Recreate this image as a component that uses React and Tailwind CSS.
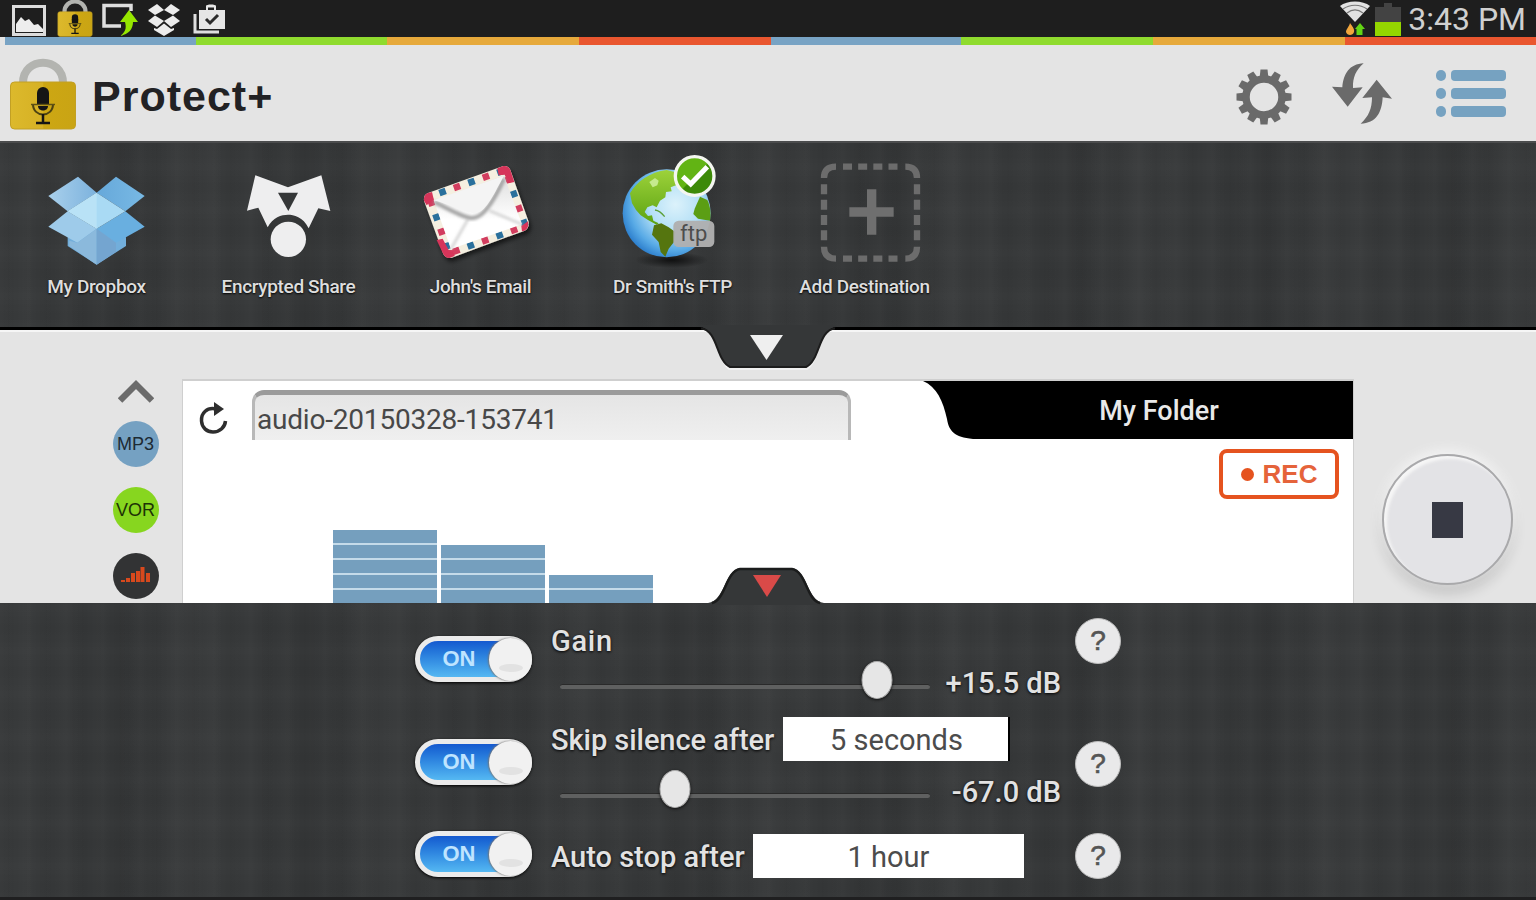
const LINEN =
  'bg-[#363839] bg-[repeating-linear-gradient(0deg,transparent_0px,rgba(0,0,0,0.025)_11px,transparent_19px,rgba(255,255,255,0.012)_31px,transparent_43px),repeating-linear-gradient(90deg,transparent_0px,rgba(0,0,0,0.03)_9px,transparent_16px,rgba(255,255,255,0.014)_29px,transparent_37px),repeating-linear-gradient(90deg,rgba(255,255,255,0.015)_0px,transparent_60px,rgba(0,0,0,0.05)_130px,rgba(255,255,255,0.015)_190px)]';

const GEAR_TEETH = [0, 30, 60, 90, 120, 150, 180, 210, 240, 270, 300, 330];

function PadlockIcon({ className }) {
  return (
    <svg className={className} viewBox="0 0 66 72">
      <defs>
        <linearGradient id="brass" x1="0" x2="1">
          <stop offset="0" stopColor="#dcb92c" />
          <stop offset="0.5" stopColor="#d6b124" />
          <stop offset="0.51" stopColor="#cda713" />
          <stop offset="1" stopColor="#c9a414" />
        </linearGradient>
      </defs>
      <path d="M13 28V25C13 -2 53 -2 53 25V28" fill="none" stroke="#b3b4b0" strokeWidth="8" />
      <rect x="0.5" y="24" width="65" height="47" rx="4" fill="url(#brass)" stroke="#c2a024" strokeWidth="1" />
      <rect x="27" y="29" width="12" height="16" rx="6" fill="#151515" />
      <rect x="27" y="38" width="12" height="8" fill="#151515" />
      <path d="M28 48H38C38 54 28 54 28 48Z" fill="#151515" />
      <path d="M23 46C23 60 43 60 43 46" fill="none" stroke="#4d4312" strokeWidth="2" />
      <path d="M33 56V64M26 65H40" stroke="#151515" strokeWidth="2.500" />
      <path d="M21 46.500H45" stroke="#5d5115" strokeWidth="1.500" />
    </svg>
  );
}

function StatusBar() {
  return (
    <div className="flex h-[37px] items-end justify-between bg-[#1e1e1e]">
      <div className="flex h-[37px] items-end pl-3">
        <svg className="h-8 w-[35px]" viewBox="0 0 35 32">
          <rect x="0" y="0" width="34" height="31" fill="#dcdcdc" />
          <rect x="3" y="3" width="28" height="25" fill="#1e1e1e" />
          <path d="M4 27V19L9 12L13 16L17 14L22 20L26 19L31 24V27Z" fill="#ededed" />
        </svg>
        <PadlockIcon className="ml-[10px] h-[38px] w-[36px] shrink-0" />
        <svg className="ml-[9px] h-[34px] w-[36px]" viewBox="0 0 36 34">
          <path d="M29 8V2.500H2V23H19" fill="none" stroke="#dedede" strokeWidth="3.500" />
          <path d="M18 33C25 28 24 23 23 19H18L27 7L36 19H31C31 26 27 31 18 33Z" fill="#96e600" />
        </svg>
        <svg className="ml-[9px] h-[34px] w-[34px]" viewBox="0 0 34 34">
          <g fill="#ececec">
            <path d="M1 7L10 1L17 7L8 12Z" />
            <path d="M33 7L24 1L17 7L26 12Z" />
            <path d="M1 18L8 12.500L17 18L10 24Z" />
            <path d="M33 18L26 12.500L17 18L24 24Z" />
            <path d="M7 25L10 26L17 20.500L24 26L27 25V27L17 33L7 27Z" />
          </g>
        </svg>
        <svg className="ml-[12px] h-[33px] w-[33px]" viewBox="0 0 33 33">
          <path d="M2 10V28H26" fill="none" stroke="#dedede" strokeWidth="3" />
          <path d="M6 6H13V2C13 0 23 0 23 2V6H32V25H6Z" fill="#e6e6e6" />
          <path d="M15 6V3.500H21V6Z" fill="#1e1e1e" />
          <path d="M13 15L17 19L25 11" fill="none" stroke="#2a2a2a" strokeWidth="3" />
        </svg>
      </div>
      <div className="flex h-[37px] items-end pr-[10px]">
        <svg className="h-9 w-8" viewBox="0 0 32 36">
          <path d="M1 5C8 -1 24 -1 31 5L16 21Z" fill="#e2e2e2" />
          <path d="M4 8C11 3 21 3 28 8M8 12C13 8 19 8 24 12" fill="none" stroke="#777" strokeWidth="1.200" />
          <path d="M11 22C13 25 16 28 15 31C14 35 8 35 7 31C7 28 10 26 11 22Z" fill="#f2a63c" />
          <path d="M21 22L26 28H23.500V34H17.500V28H16Z" fill="#63d414" />
        </svg>
        <svg className="ml-1 h-9 w-[26px]" viewBox="0 0 26 36">
          <path d="M0 6H9V2H17V6H26V21H0Z" fill="#434343" />
          <rect y="21" width="26" height="14" fill="#94d600" />
        </svg>
        <span className="ml-[7px] text-[32px] leading-[36px] text-[#d0d0d0]">3:43 PM</span>
      </div>
    </div>
  );
}

function ColorStripe() {
  return (
    <div className="flex h-2 bg-[#e4e4e4] pl-[5px]">
      <div className="w-[191px] bg-[#78a3c4]" />
      <div className="w-[191px] bg-[#8fdb2e]" />
      <div className="w-[192px] bg-[#e6a93b]" />
      <div className="w-[192px] bg-[#e9562f]" />
      <div className="w-[190px] bg-[#78a3c4]" />
      <div className="w-[192px] bg-[#8fdb2e]" />
      <div className="w-[192px] bg-[#e6a93b]" />
      <div className="flex-1 bg-[#e9562f]" />
    </div>
  );
}

function Header() {
  return (
    <header className="flex h-24 items-center bg-[#e4e4e4] pl-[10px] pr-[29px]">
      <PadlockIcon className="mt-[2px] h-[72px] w-[66px]" />
      <h1 className="ml-[16px] mt-[7px] font-['Liberation_Sans',sans-serif] text-[43px] font-bold leading-none tracking-[1px] text-[#222224]">
        Protect+
      </h1>
      <div className="ml-auto flex items-center">
        <svg className="mt-2 h-14 w-14" viewBox="-28 -28 56 56">
          {GEAR_TEETH.map((angle) => (
            <path key={angle} d="M-3.500 -27.500H3.500L4.500 -18H-4.500Z" fill="#6a6a6a" transform={`rotate(${angle})`} />
          ))}
          <circle r="18" fill="none" stroke="#6a6a6a" strokeWidth="7.500" />
        </svg>
        <svg className="ml-10 h-[61px] w-[60px]" viewBox="398 189 180 183">
          <path d="M493 190C450 192 432 222 429 262L398 260L445 320L490 262L461 264C460 232 470 210 493 190Z" fill="#6a6a6a" />
          <path d="M484 371C530 370 548 338 550 292L578 296L532 239L489 294L518 292C518 326 508 350 484 371Z" fill="#6a6a6a" />
        </svg>
        <svg className="ml-[43px] mt-[2px] h-[50px] w-[72px]" viewBox="0 0 72 50">
          <g fill="#76a2c1">
            <rect x="1" y="1" width="10" height="11" rx="5" />
            <rect x="16" y="1" width="55" height="11" rx="4" />
            <rect x="1" y="19" width="10" height="11" rx="5" />
            <rect x="16" y="19" width="55" height="11" rx="4" />
            <rect x="1" y="37" width="10" height="11" rx="5" />
            <rect x="16" y="37" width="55" height="11" rx="4" />
          </g>
        </svg>
      </div>
    </header>
  );
}

function DropboxIcon() {
  return (
    <svg className="h-[120px] w-48" viewBox="-60 0 576 360">
      <defs>
        <linearGradient id="flapLeft" x1="0" x2="1">
          <stop offset="0" stopColor="#a9d0ec" />
          <stop offset="1" stopColor="#7cb2dd" />
        </linearGradient>
        <linearGradient id="flapRight" x1="0" x2="1">
          <stop offset="0" stopColor="#66a8da" />
          <stop offset="1" stopColor="#78b9e4" />
        </linearGradient>
      </defs>
      <path d="M85 138L174 80L230 128L143 184Z" fill="url(#flapLeft)" />
      <path d="M374 138L288 80L230 128L316 184Z" fill="url(#flapRight)" />
      <path d="M143 262L230 235L318 262V288L230 344L143 288Z" fill="#72aedb" />
      <path d="M85 230L143 184L230 236L172 278Z" fill="#9ecbea" />
      <path d="M374 230L316 184L230 236L288 278Z" fill="#69afe0" />
      <path d="M230 236L172 278L148 272V288L230 344Z" fill="#8bb9dc" />
      <path d="M230 236L288 278V305L230 344Z" fill="#74a5d0" />
      <path d="M230 128L316 184L230 236L143 184Z" fill="#a9daf4" />
      <path d="M230 128L143 184L230 236Z" fill="#b9e2f6" />
    </svg>
  );
}

function ShareIcon() {
  return (
    <svg className="h-[120px] w-48" viewBox="516 0 576 360">
      <path
        d="M706 76L804 112L904 76L931 183L895 175L866 235C850 200 820 194 804 194C785 194 758 202 743 232L715 173L681 182Z"
        fill="#eeeeef"
      />
      <path d="M774 128H834L805 183Z" fill="#353738" />
      <circle cx="805" cy="268" r="53" fill="#eeeeef" />
    </svg>
  );
}

function EmailIcon() {
  return (
    <svg className="h-[120px] w-48" viewBox="-48 0 576 360">
      <defs>
        <linearGradient id="paper" x1="0" y1="0" x2="0" y2="1">
          <stop offset="0" stopColor="#dedede" />
          <stop offset="0.6" stopColor="#ffffff" />
        </linearGradient>
        <filter id="mailShadow" x="-20%" y="-20%" width="140%" height="150%">
          <feDropShadow dx="6" dy="10" stdDeviation="7" floodColor="#000" floodOpacity="0.6" />
        </filter>
        <filter id="foldShadow">
          <feGaussianBlur stdDeviation="5" />
        </filter>
      </defs>
      <g filter="url(#mailShadow)">
        <path d="M84 129L310 48Q325 46 331 60L386 215Q388 235 374 242L155 323Q138 326 130 312L72 152Q70 134 84 129Z" fill="#f5efe0" />
        <path d="M88 140L316 60L376 228L147 310Z" fill="none" stroke="#d23c5e" strokeWidth="20" strokeDasharray="20 72" strokeDashoffset="-78" />
        <path d="M88 140L316 60L376 228L147 310Z" fill="none" stroke="#2a6f9c" strokeWidth="20" strokeDasharray="20 72" strokeDashoffset="-32" />
        <path d="M72 152Q70 134 84 129L96 126L101 147L80 166Z" fill="#d6345a" />
        <path d="M292 55L310 48Q325 46 331 60L343 96L325 100L314 74L296 76Z" fill="#d6345a" />
        <path d="M110 270L128 266L146 300L160 300L164 318L148 324Q136 324 130 312Z" fill="#d6345a" />
        <path d="M364 228L384 214Q388 235 374 242L366 244Z" fill="#d6345a" />
      </g>
      <path d="M101 151L312 77L366 223L153 297Z" fill="url(#paper)" />
      <path d="M153 297L204 208M366 223L268 182" stroke="#c4c4c4" strokeWidth="6" filter="url(#foldShadow)" />
      <path
        d="M103 156C150 178 190 204 218 204C250 205 285 145 312 86"
        fill="none"
        stroke="#a0a0a0"
        strokeWidth="12"
        filter="url(#foldShadow)"
      />
      <path d="M101 151L312 77C285 125 260 184 230 188C205 196 150 162 101 151Z" fill="#f4f4f4" />
    </svg>
  );
}

function FtpIcon() {
  return (
    <svg className="h-[120px] w-48" viewBox="528 0 576 360">
      <defs>
        <radialGradient id="ocean" cx="0.6" cy="0.4" r="0.65">
          <stop offset="0" stopColor="#dcf2fb" />
          <stop offset="0.45" stopColor="#b5e0f6" />
          <stop offset="0.8" stopColor="#58aae6" />
          <stop offset="1" stopColor="#2a7ccb" />
        </radialGradient>
        <linearGradient id="land" x1="0" y1="0" x2="0" y2="1">
          <stop offset="0" stopColor="#9dd23a" />
          <stop offset="1" stopColor="#5ca312" />
        </linearGradient>
        <linearGradient id="check" x1="0" y1="0" x2="1" y2="1">
          <stop offset="0.5" stopColor="#62b414" />
          <stop offset="0.52" stopColor="#3d8a08" />
        </linearGradient>
        <radialGradient id="floor">
          <stop offset="0" stopColor="#000" stopOpacity="0.7" />
          <stop offset="1" stopColor="#000" stopOpacity="0" />
        </radialGradient>
      </defs>
      <ellipse cx="815" cy="330" rx="110" ry="24" fill="url(#floor)" />
      <circle cx="800" cy="190" r="132" fill="url(#ocean)" />
      <path
        d="M690 130C710 95 750 66 800 60L824 66L830 105L812 112L815 124L798 126L796 142L780 152L770 172L758 166L742 172L734 186L744 198L756 196L760 212L776 220L770 224L744 210L722 196L708 180L696 160Z"
        fill="url(#land)"
      />
      <path d="M748 96L765 84L776 92L772 106L758 112Z" fill="#c6ea8e" />
      <path d="M762 226L784 220L806 232L826 246L822 276L806 296L796 320L782 306L776 276L756 254Z" fill="#55750f" />
      <path d="M884 176L900 140L922 150C932 170 933 195 930 212L894 206L880 192Z" fill="#5b9e14" />
      <path d="M765 180C780 182 786 190 794 200" fill="none" stroke="#5c9f38" strokeWidth="4" />
      <rect x="820" y="212" width="123" height="79" rx="16" fill="#b0b0b0" fillOpacity="0.96" />
      <text x="881" y="274" textAnchor="middle" fontSize="66" fontFamily="Roboto, sans-serif" fill="#4d4d4d">
        ftp
      </text>
      <circle cx="884" cy="78" r="58" fill="url(#check)" stroke="#f4f6f0" strokeWidth="10" />
      <path d="M848 80L872 102L922 50" fill="none" stroke="#fff" strokeWidth="15" />
    </svg>
  );
}

function AddIcon() {
  return (
    <svg className="h-[120px] w-48" viewBox="234 0 576 360">
      <g fill="none" stroke="#6c6c6c" strokeWidth="19" strokeLinejoin="round">
        <path d="M402 84Q402 50 438 50M646 50Q681 50 681 84M681 290Q681 326 646 326M438 326Q402 326 402 290" />
        <path d="M459 50H624M459 326H624" strokeDasharray="27 18.500" />
        <path d="M402 103V276M681 103V276" strokeDasharray="30 16" />
      </g>
      <path d="M531 118H559V172H611V200H559V254H531V200H478V172H531Z" fill="#6f6f6f" />
    </svg>
  );
}

const destinations = [
  { name: 'My Dropbox', Icon: DropboxIcon },
  { name: 'Encrypted Share', Icon: ShareIcon },
  { name: "John's Email", Icon: EmailIcon },
  { name: "Dr Smith's FTP", Icon: FtpIcon },
  { name: 'Add Destination', Icon: AddIcon },
];

function Destinations() {
  return (
    <section className={`relative z-10 flex h-[189px] border-t-2 border-b-[3px] border-t-[#4b4c4d] border-b-black pt-[7px] ${LINEN}`}>
      {destinations.map(({ name, Icon }) => (
        <div key={name} className="flex w-48 flex-col items-center">
          <Icon />
          <span className="mt-[5px] whitespace-nowrap pl-px text-[19px] font-medium leading-6 tracking-[-0.35px] text-[#dedede] [text-shadow:0_1px_2px_#000]">
            {name}
          </span>
        </div>
      ))}
      {/* Pull-down handle hanging under the panel */}
      <svg className="absolute left-[700px] top-[182px] h-[46px] w-[136px]" viewBox="0 0 136 46">
        <path d="M4 5C18 7 18 37 29 44H107C119 38 118 7 132 5" fill="none" stroke="#f3f3f3" strokeWidth="1.500" />
        <path d="M0 0H136V2C120 3 119 36 106 42H30C17 36 16 3 0 2Z" fill="#353738" />
        <path d="M1 3.500C18 5 16 36 30 42H106C120 36 118 5 135 3.500" fill="none" stroke="#1c1c1c" strokeWidth="2" />
        <path d="M50 10H83L66.500 35Z" fill="#efefef" />
      </svg>
    </section>
  );
}

const LEVELS = [5, 4, 2];

function Recorder() {
  return (
    <section className="flex h-[273px] overflow-hidden border-t-2 border-[#f6f6f6] bg-[#e4e4e4]">
      {/* Mode badges */}
      <div className="flex w-[182px] flex-col items-center pl-[89px] pt-[47px]">
        <svg className="h-6 w-9" viewBox="0 0 36 24">
          <path d="M2 21.500L18 5.500L34 21.500" fill="none" stroke="#6b6b6b" strokeWidth="6.500" />
        </svg>
        <div className="mt-[18px] flex h-[46px] w-[46px] items-center justify-center rounded-full bg-[#75a1c2] font-['Liberation_Sans',sans-serif] text-[18px] text-[#1d2a33]">
          MP3
        </div>
        <div className="mt-5 flex h-[46px] w-[46px] items-center justify-center rounded-full bg-[#87d61f] font-['Liberation_Sans',sans-serif] text-[18px] text-[#1d3305]">
          VOR
        </div>
        <div className="mt-5 flex h-[46px] w-[46px] items-center justify-center rounded-full bg-[#323334]">
          <svg className="-mt-1 h-5 w-8" viewBox="0 0 32 20">
            <path d="M1 18V16H5V18ZM6 18V14H10V18ZM11 18V9H15V18ZM16 18V7H20V18ZM20.500 18V3H24.500V18ZM26 18V9H30V18Z" fill="#d8491d" />
          </svg>
        </div>
      </div>

      {/* Recording card */}
      <div className="mt-[47px] flex w-[1172px] flex-col border-x border-t-2 border-[#cfcfcf] bg-white">
        <div className="flex h-[59px]">
          <svg className="ml-[16px] mt-[21px] h-[34px] w-[30px]" viewBox="0 0 30 34">
            <path d="M17 7C8 5 2 11 2.500 19C3 26 8 30 14 30C21 30 26 25 26.500 19" fill="none" stroke="#2e2e2e" strokeWidth="3.500" />
            <path d="M15 0L25 7L15 14Z" fill="#2e2e2e" />
          </svg>
          <div className="ml-[23px] mt-[9px] flex h-[50px] w-[599px] items-center rounded-t-xl border-x-[3px] border-t-[5px] border-x-[#b8b8b8] border-t-[#9b9b9b] bg-linear-to-b from-[#e5e5e5] to-[#efefef] pl-[2px] pt-[5px] text-[28px] tracking-[-0.2px] text-[#484848]">
            audio-20150328-153741
          </div>
          <div className="relative ml-auto h-[59px] w-[430px]">
            <svg className="absolute inset-0 h-full w-full" viewBox="0 0 430 59">
              <path d="M0 0C14 6 20 20 24 38C26 50 31 56 50 58H430V0Z" fill="#000" />
            </svg>
            <div className="relative pl-[42px] pt-[9px] text-center text-[27px] font-medium leading-[42px] text-[#e9e9e9]">
              My Folder
            </div>
          </div>
        </div>
        <div className="flex flex-1 justify-between pl-[150px] pr-[14px]">
          <div className="flex items-end gap-1">
            {LEVELS.map((level, i) => (
              <div key={i} className="flex w-[104px] flex-col gap-[2px] bg-[#c5dbe9]">
                {Array.from({ length: level }, (_, n) => (
                  <div key={n} className="h-[13px] bg-[#759fbe]" />
                ))}
              </div>
            ))}
          </div>
          <div className="mt-[9px] flex h-[50px] w-[120px] items-center justify-center gap-[9px] rounded-lg border-4 border-[#e5531f] font-['Liberation_Sans',sans-serif] text-[26px] font-bold text-[#e5633a]">
            <span className="h-[13px] w-[13px] rounded-full bg-[#e5531f]" />
            REC
          </div>
        </div>
      </div>

      {/* Stop button */}
      <div className="flex flex-1 justify-center pl-1 pt-[122px]">
        <div className="flex h-[131px] w-[131px] items-center justify-center rounded-full border-2 border-[#a9a9ab] bg-[#e3e3e6] shadow-[0_-4px_12px_#f4f4f4,0_9px_14px_rgba(0,0,0,0.14),inset_3px_3px_3px_#f6f6f6]">
          <div className="h-9 w-[31px] bg-[#373944]" />
        </div>
      </div>
    </section>
  );
}

function Toggle({ className }) {
  return (
    <div className={`flex h-[46px] w-[117px] shrink-0 items-center rounded-full border-[5px] border-[#ebebeb] bg-linear-to-b from-[#1559cf] to-[#55b8f2] shadow-[0_1px_3px_#000] ${className}`}>
      <span className="-mt-[2px] w-[76px] pl-[9px] text-center font-['Liberation_Sans',sans-serif] text-[22px] font-bold text-[#bfe4ff]">ON</span>
      <div className="-mr-[5px] ml-auto flex h-[43px] w-[43px] shrink-0 items-end justify-center rounded-full bg-[#f1f1f1] pb-[9px] shadow-[-1px_0_2px_#777]">
        <div className="h-2 w-6 rounded-[50%] bg-[#e2e2e2]" />
      </div>
    </div>
  );
}

function Slider({ value, percent, className }) {
  return (
    <div className={`flex h-10 items-center justify-between ${className}`}>
      <div className="relative ml-[9px] h-[5px] w-[370px] rounded-full border-t border-[#2a2a2a] bg-[#5f6060]">
        <div
          className="absolute -top-[24px] h-[38px] w-[31px] -translate-x-1/2 rounded-[50%] border border-[#aaa] bg-[#e6e6e6] shadow-[0_1px_3px_#111]"
          style={{ left: `${percent}%` }}
        />
      </div>
      <span className="mt-[-7px] text-[29px] font-medium leading-8 text-[#e2e2e2] [text-shadow:0_1px_3px_#000]">{value}</span>
    </div>
  );
}

function Help({ className }) {
  return (
    <button className={`h-[46px] w-[46px] shrink-0 rounded-full border border-[#bdbdbd] bg-[#e9e9ea] font-['Liberation_Sans',sans-serif] text-[28px] leading-none text-[#555] [-webkit-text-stroke:0.6px_#555] ${className}`}>
      ?
    </button>
  );
}

function Settings() {
  return (
    <section className={`relative h-[297px] border-b-[3px] border-[#1f1f20] pl-[415px] ${LINEN}`}>
      {/* Handle standing on top of the panel */}
      <svg className="absolute left-[708px] -top-[37px] h-[39px] w-[116px]" viewBox="0 0 116 39">
        <path d="M0 39V37C17 35 16 5 32 2H84C100 5 99 35 116 37V39Z" fill="#353738" />
        <path d="M4 37C17 35 18 5 32 3H84C98 5 99 35 112 37" fill="none" stroke="#1b1c1c" strokeWidth="2.500" />
        <path d="M45 9H73L59 31Z" fill="#d94a48" />
      </svg>

      <div className="flex h-[108px] w-[706px]">
        <Toggle className="mt-[33px]" />
        <div className="ml-[19px] w-[510px] pt-[18px]">
          <div className="h-10 text-[29px] font-medium leading-10 tracking-[0.7px] text-[#e2e2e2] [text-shadow:0_1px_3px_#000]">Gain</div>
          <Slider value="+15.5 dB" percent={85.800} className="mt-[5px]" />
        </div>
        <Help className="ml-auto mt-[15px]" />
      </div>

      <div className="flex h-[114px] w-[706px]">
        <Toggle className="mt-[28px]" />
        <div className="ml-[19px] w-[510px] pt-[6px]">
          <div className="flex h-11 items-center text-[29px] text-[#e2e2e2]">
            <span className="w-[232px] whitespace-nowrap pt-[4px] font-medium tracking-[-0.05px] [text-shadow:0_1px_3px_#000]">Skip silence after</span>
            <div className="h-11 w-[227px] border-r-2 border-black bg-white pl-[2px] text-center leading-[47px] text-[#4c4c4c]">5 seconds</div>
          </div>
          <Slider value="-67.0 dB" percent={31} className="mt-[14px]" />
        </div>
        <Help className="ml-auto mt-[30px]" />
      </div>

      <div className="flex w-[706px]">
        <Toggle className="mt-[6px]" />
        <div className="ml-[19px] mt-[9px] flex h-11 w-[510px] items-center text-[29px] text-[#e2e2e2]">
          <span className="w-[202px] whitespace-nowrap pt-[4px] font-medium [text-shadow:0_1px_3px_#000]">Auto stop after</span>
          <div className="h-11 w-[271px] bg-white text-center leading-[47px] text-[#4c4c4c]">1 hour</div>
        </div>
        <Help className="ml-auto mt-[8px]" />
      </div>
    </section>
  );
}

export default function App() {
  return (
    <main className="h-[900px] w-[1536px] overflow-hidden bg-[#e4e4e4] font-[Roboto,sans-serif]">
      <StatusBar />
      <ColorStripe />
      <Header />
      <Destinations />
      <Recorder />
      <Settings />
    </main>
  );
}
